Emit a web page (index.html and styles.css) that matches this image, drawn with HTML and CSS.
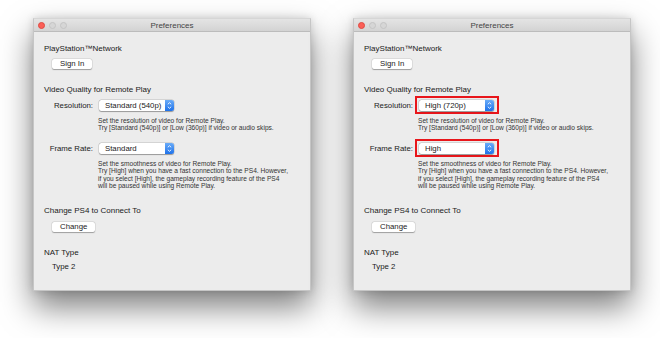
FILE: index.html
```html
<!DOCTYPE html>
<html>
<head>
    <title>Preferences</title>
    <link rel="stylesheet" href="styles.css">
</head>
<body>
    <div class="desktop">
        <div class="window">
            <div class="titlebar">
                <div class="lights">
                    <span class="light light-close"></span>
                    <span class="light"></span>
                    <span class="light"></span>
                </div>
                <div class="title">Preferences</div>
                <div></div>
            </div>
            <div class="content">
                <h2 class="section">PlayStation™Network</h2>
                <button class="btn btn-first">Sign In</button>

                <h2 class="section section-gap">Video Quality for Remote Play</h2>
                <div class="row">
                    <span class="row-label">Resolution:</span>
                    <div class="popup">
                        <span class="popup-text">Standard (540p)</span>
                        <span class="stepper">
                            <svg width="9" height="11" viewBox="0 0 9 11"><path d="M2.8 4.3 L4.5 2.7 L6.2 4.3 M2.8 6.7 L4.5 8.3 L6.2 6.7" fill="none" stroke="#fff" stroke-width="0.9"/></svg>
                        </span>
                    </div>
                </div>
                <p class="hint">Set the resolution of video for Remote Play.<br>Try [Standard (540p)] or [Low (360p)] if video or audio skips.</p>
                <div class="row row-second">
                    <span class="row-label">Frame Rate:</span>
                    <div class="popup">
                        <span class="popup-text">Standard</span>
                        <span class="stepper">
                            <svg width="9" height="11" viewBox="0 0 9 11"><path d="M2.8 4.3 L4.5 2.7 L6.2 4.3 M2.8 6.7 L4.5 8.3 L6.2 6.7" fill="none" stroke="#fff" stroke-width="0.9"/></svg>
                        </span>
                    </div>
                </div>
                <p class="hint">Set the smoothness of video for Remote Play.<br>Try [High] when you have a fast connection to the PS4. However,<br>if you select [High], the gameplay recording feature of the PS4<br>will be paused while using Remote Play.</p>

                <h2 class="section section-gap2">Change PS4 to Connect To</h2>
                <button class="btn">Change</button>

                <h2 class="section section-gap">NAT Type</h2>
                <div class="value">Type 2</div>
            </div>
        </div>

        <div class="window">
            <div class="titlebar">
                <div class="lights">
                    <span class="light light-close"></span>
                    <span class="light"></span>
                    <span class="light"></span>
                </div>
                <div class="title">Preferences</div>
                <div></div>
            </div>
            <div class="content">
                <h2 class="section">PlayStation™Network</h2>
                <button class="btn btn-first">Sign In</button>

                <h2 class="section section-gap">Video Quality for Remote Play</h2>
                <div class="row">
                    <span class="row-label">Resolution:</span>
                    <div class="mark">
                        <div class="popup">
                            <span class="popup-text">High (720p)</span>
                            <span class="stepper">
                                <svg width="9" height="11" viewBox="0 0 9 11"><path d="M2.8 4.3 L4.5 2.7 L6.2 4.3 M2.8 6.7 L4.5 8.3 L6.2 6.7" fill="none" stroke="#fff" stroke-width="0.9"/></svg>
                            </span>
                        </div>
                    </div>
                </div>
                <p class="hint">Set the resolution of video for Remote Play.<br>Try [Standard (540p)] or [Low (360p)] if video or audio skips.</p>
                <div class="row row-second">
                    <span class="row-label">Frame Rate:</span>
                    <div class="mark">
                        <div class="popup">
                            <span class="popup-text">High</span>
                            <span class="stepper">
                                <svg width="9" height="11" viewBox="0 0 9 11"><path d="M2.8 4.3 L4.5 2.7 L6.2 4.3 M2.8 6.7 L4.5 8.3 L6.2 6.7" fill="none" stroke="#fff" stroke-width="0.9"/></svg>
                            </span>
                        </div>
                    </div>
                </div>
                <p class="hint">Set the smoothness of video for Remote Play.<br>Try [High] when you have a fast connection to the PS4. However,<br>if you select [High], the gameplay recording feature of the PS4<br>will be paused while using Remote Play.</p>

                <h2 class="section section-gap2">Change PS4 to Connect To</h2>
                <button class="btn">Change</button>

                <h2 class="section section-gap">NAT Type</h2>
                <div class="value">Type 2</div>
            </div>
        </div>
    </div>
</body>
</html>
```

FILE: styles.css
```css
body {
    margin: 0;
    background-color: #fff;
    font-family: "Liberation Sans", Arial, sans-serif;
    color: #1a1a1a;
}

.desktop {
    display: flex;
    gap: 42px;
    padding: 18px 0 47px 33px;
}

.window {
    width: 278px;
    height: 273px;
    box-sizing: border-box;
    background-color: #ececec;
    border: 1px solid #c6c6c6;
    border-top-color: #d6d6d6;
    box-shadow: 0 16px 30px rgba(0, 0, 0, 0.5), 0 0 8px rgba(0, 0, 0, 0.15);
    display: flex;
    flex-direction: column;
}

.titlebar {
    height: 12px;
    background: linear-gradient(#e4e4e4, #d3d3d3);
    border-bottom: 1px solid #bcbcbc;
    display: grid;
    grid-template-columns: 1fr auto 1fr;
    align-items: center;
}

.lights {
    display: flex;
    gap: 4px;
    padding-left: 4px;
}

.light {
    width: 7px;
    height: 7px;
    box-sizing: border-box;
    border-radius: 50%;
    background-color: #d6d6d6;
    border: 0.5px solid #c4c4c4;
}

.light-close {
    background-color: #fc5f57;
    border-color: #de4a42;
}

.title {
    font-size: 8px;
    color: #444;
}

.content {
    padding: 12px 10px 0;
    display: flex;
    flex-direction: column;
    align-items: flex-start;
}

.section {
    margin: 0;
    font-size: 8px;
    line-height: 10px;
    font-weight: normal;
    color: #1a1a1a;
}

.section-gap {
    margin-top: 16px;
}

.section-gap2 {
    margin-top: 17px;
}

.btn {
    margin: 6px 0 0 8px;
    height: 10px;
    padding: 0 8px;
    border: none;
    border-radius: 2px;
    background-color: #fff;
    box-shadow: 0 0.5px 1px rgba(0, 0, 0, 0.3), 0 0 0 0.5px rgba(0, 0, 0, 0.08);
    font-family: inherit;
    font-size: 7.8px;
    line-height: 10px;
    color: #1a1a1a;
}

.btn-first {
    margin-top: 5px;
}

.row {
    display: flex;
    align-items: center;
    gap: 6px;
    margin-top: 5px;
}

.row-second {
    margin-top: 11.5px;
}

.row-label {
    width: 49px;
    text-align: right;
    font-size: 7.8px;
    color: #1a1a1a;
}

.mark {
    margin: -4px -5px -3px -4px;
    padding: 2px 3px 1px 2px;
    border: 2px solid #e8161b;
}

.popup {
    width: 75px;
    height: 11px;
    display: flex;
    align-items: center;
    justify-content: space-between;
    background-color: #fff;
    border-radius: 2.5px;
    box-shadow: 0 0 0 0.5px rgba(0, 0, 0, 0.15), 0 0.5px 1px rgba(0, 0, 0, 0.3);
}

.popup-text {
    padding-left: 6px;
    font-size: 7.8px;
    color: #1a1a1a;
}

.stepper {
    width: 9px;
    height: 11px;
    border-radius: 0 2.5px 2.5px 0;
    background: linear-gradient(#69abf8, #1f72ea);
    display: flex;
}

.hint {
    margin: 6px 0 0 54px;
    font-size: 6.6px;
    line-height: 7.3px;
    color: #333;
    white-space: nowrap;
}

.value {
    margin: 4px 0 0 8px;
    font-size: 7.8px;
    line-height: 10px;
    color: #1a1a1a;
}
```
